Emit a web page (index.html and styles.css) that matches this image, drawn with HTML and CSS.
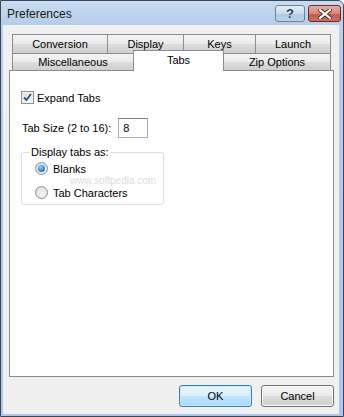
FILE: index.html
```html
<html>
<head>
    <meta charset="UTF-8">
    <title>Preferences</title>
    <link rel="stylesheet" href="styles.css">
</head>
<body>
    <div class="window">
        <div class="titlebar">
            <span class="title">Preferences</span>
            <div class="caption-buttons">
                <button class="cap-btn help">?</button>
                <button class="cap-btn close">
                    <svg width="14" height="10" viewBox="0 0 14 10">
                        <path d="M2 1 L12 9 M12 1 L2 9" stroke="#4a2320" stroke-width="4" stroke-linecap="square"/>
                        <path d="M2 1 L12 9 M12 1 L2 9" stroke="#fff" stroke-width="2.2" stroke-linecap="square"/>
                    </svg>
                </button>
            </div>
        </div>
        <div class="frame">
            <div class="client">
                <div class="tab-strip">
                    <div class="tab-row">
                        <div class="tab w-conv">Conversion</div>
                        <div class="tab w-disp">Display</div>
                        <div class="tab w-keys">Keys</div>
                        <div class="tab w-launch last">Launch</div>
                    </div>
                    <div class="tab-row">
                        <div class="tab w-misc">Miscellaneous</div>
                        <div class="tab selected">Tabs</div>
                        <div class="tab w-zip last no-left">Zip Options</div>
                    </div>
                </div>

                <div class="panel">
                    <div class="watermark-url">www.softpedia.com</div>

                    <label class="check-row">
                        <span class="checkbox">
                            <svg width="9" height="9" viewBox="0 0 9 9">
                                <path d="M1 4.5 L3.5 7 L8 1" fill="none" stroke="#2a4f86" stroke-width="1.8"/>
                            </svg>
                        </span>
                        Expand Tabs
                    </label>

                    <div class="size-row">
                        <span>Tab Size (2 to 16):</span>
                        <div class="textbox">8</div>
                    </div>

                    <fieldset class="group">
                        <legend>Display tabs as:</legend>
                        <label class="radio-row">
                            <span class="radio checked"></span>
                            Blanks
                        </label>
                        <label class="radio-row">
                            <span class="radio"></span>
                            Tab Characters
                        </label>
                    </fieldset>
                </div>

                <div class="button-row">
                    <button class="btn default">OK</button>
                    <button class="btn">Cancel</button>
                </div>
            </div>
        </div>
    </div>
</body>
</html>
```

FILE: styles.css
```css
* {
    margin: 0;
    padding: 0;
    box-sizing: border-box;
}

body {
    font-family: 'Liberation Sans', Arial, sans-serif;
    font-size: 11px;
    color: #000;
    background: #fff;
}

.window {
    width: 344px;
    height: 417px;
    border: 1px solid #3b4759;
    border-top-right-radius: 6px;
    display: flex;
    flex-direction: column;
    background: linear-gradient(#c3d7ee, #b4cce8 60px, #aec7e6);
    overflow: hidden;
}

.titlebar {
    height: 24px;
    display: flex;
    align-items: center;
    justify-content: space-between;
    padding-left: 6px;
    background: linear-gradient(#c8dbf1, #b5cde9);
}

.title {
    font-size: 12px;
    color: #1a1a1a;
    margin-top: 2px;
}

.caption-buttons {
    display: flex;
    gap: 3px;
    margin-right: 2px;
    align-self: flex-start;
    margin-top: 4px;
}

.cap-btn {
    height: 17px;
    border-radius: 3px;
    display: flex;
    align-items: center;
    justify-content: center;
    font-family: 'Liberation Sans', Arial, sans-serif;
}

.help {
    width: 30px;
    border: 1px solid #6f8196;
    background: linear-gradient(#e4eef9, #c9dbef 50%, #b2c9e4 51%, #bcd2ea);
    color: #2d3a4b;
    font-size: 13px;
    font-weight: bold;
    text-shadow: 0 0 1px #fff;
}

.close {
    width: 33px;
    border: 1px solid #6e2b25;
    background: linear-gradient(#e6aca2, #d3897c 50%, #c25a4b 51%, #cb7060);
}

.frame {
    flex: 1;
    display: flex;
    padding: 0 5px 2px 2px;
}

.client {
    flex: 1;
    background: #f0f0f0;
    padding: 9px 5px 0 6px;
    display: flex;
    flex-direction: column;
}

.tab-strip {
    margin: 0 3px;
}

.tab-row {
    display: flex;
    align-items: flex-start;
}

.tab-row:first-child .tab {
    height: 19px;
}

.tab {
    height: 17px;
    border: 1px solid #898c95;
    border-bottom: none;
    border-right: none;
    background: linear-gradient(#f3f3f3, #ebebeb 50%, #dddddd 51%, #cfcfcf);
    font-size: 11px;
    display: flex;
    align-items: center;
    justify-content: center;
    color: #000;
}

.tab.last {
    border-right: 1px solid #898c95;
}

.tab.no-left {
    border-left: none;
}

.w-conv { width: 95px; }
.w-disp { width: 76px; }
.w-keys { width: 72px; }
.w-launch { width: 76px; }
.w-misc { width: 121px; }
.w-zip { width: 107px; }

.tab.selected {
    width: 91px;
    height: 21px;
    margin-top: -3px;
    margin-bottom: -1px;
    border-right: 1px solid #898c95;
    background: #fff;
    position: relative;
    z-index: 1;
    align-items: flex-start;
    padding-top: 3px;
}

.panel {
    height: 307px;
    background: #fff;
    border: 1px solid #898c95;
    padding: 20px 11px;
    position: relative;
}

.watermark-url {
    position: absolute;
    left: 60px;
    top: 104px;
    font-size: 10px;
    color: #dcdcdc;
}

.check-row {
    display: flex;
    align-items: center;
    gap: 3px;
    height: 13px;
}

.checkbox {
    width: 13px;
    height: 13px;
    border: 1px solid #8e8f8f;
    background: linear-gradient(135deg, #dcdcdc, #fbfbfb);
    display: flex;
    align-items: center;
    justify-content: center;
    box-shadow: inset 0 0 0 1px #f4f4f4;
}

.size-row {
    display: flex;
    align-items: center;
    margin-top: 14px;
    margin-left: 1px;
}

.textbox {
    width: 30px;
    height: 20px;
    margin-left: 7px;
    border: 1px solid #abadb3;
    border-top-color: #7a7c84;
    background: #fff;
    padding: 3px 0 0 4px;
    font-size: 11px;
}

.group {
    width: 143px;
    margin-top: 8px;
    border: 1px solid #d5dfe5;
    border-radius: 3px;
    padding: 4px 0 5px 13px;
    position: relative;
    z-index: 1;
}

.group legend {
    margin-left: -5px;
    padding: 0 1px;
    font-size: 11px;
    background: #fff;
}

.radio-row {
    display: flex;
    align-items: center;
    gap: 5px;
    height: 13px;
}

.radio-row + .radio-row {
    margin-top: 11px;
}

.radio {
    width: 13px;
    height: 13px;
    border-radius: 50%;
    border: 1px solid #8e8f8f;
    background: radial-gradient(circle at 60% 60%, #f6f6f6, #d6d6d6);
    position: relative;
}

.radio.checked::after {
    content: '';
    position: absolute;
    left: 2px;
    top: 2px;
    width: 7px;
    height: 7px;
    border-radius: 50%;
    background: radial-gradient(circle at 40% 35%, #9fd6ff, #2a8ad4 55%, #1b5a9c);
}

.button-row {
    display: flex;
    justify-content: flex-end;
    gap: 9px;
    margin-top: 8px;
}

.btn {
    width: 73px;
    height: 22px;
    border: 1px solid #707070;
    border-radius: 3px;
    background: linear-gradient(#f2f2f2, #ebebeb 50%, #dddddd 51%, #cfcfcf);
    font-family: 'Liberation Sans', Arial, sans-serif;
    font-size: 11px;
    color: #000;
    box-shadow: inset 0 0 0 1px #fcfcfc;
}

.btn.default {
    border-color: #3c7fb1;
    background: linear-gradient(#eaf6fd, #d9f0fc 50%, #bee6fd 51%, #a7d9f5);
    box-shadow: inset 0 0 0 1px #c9e9fb;
}
```
